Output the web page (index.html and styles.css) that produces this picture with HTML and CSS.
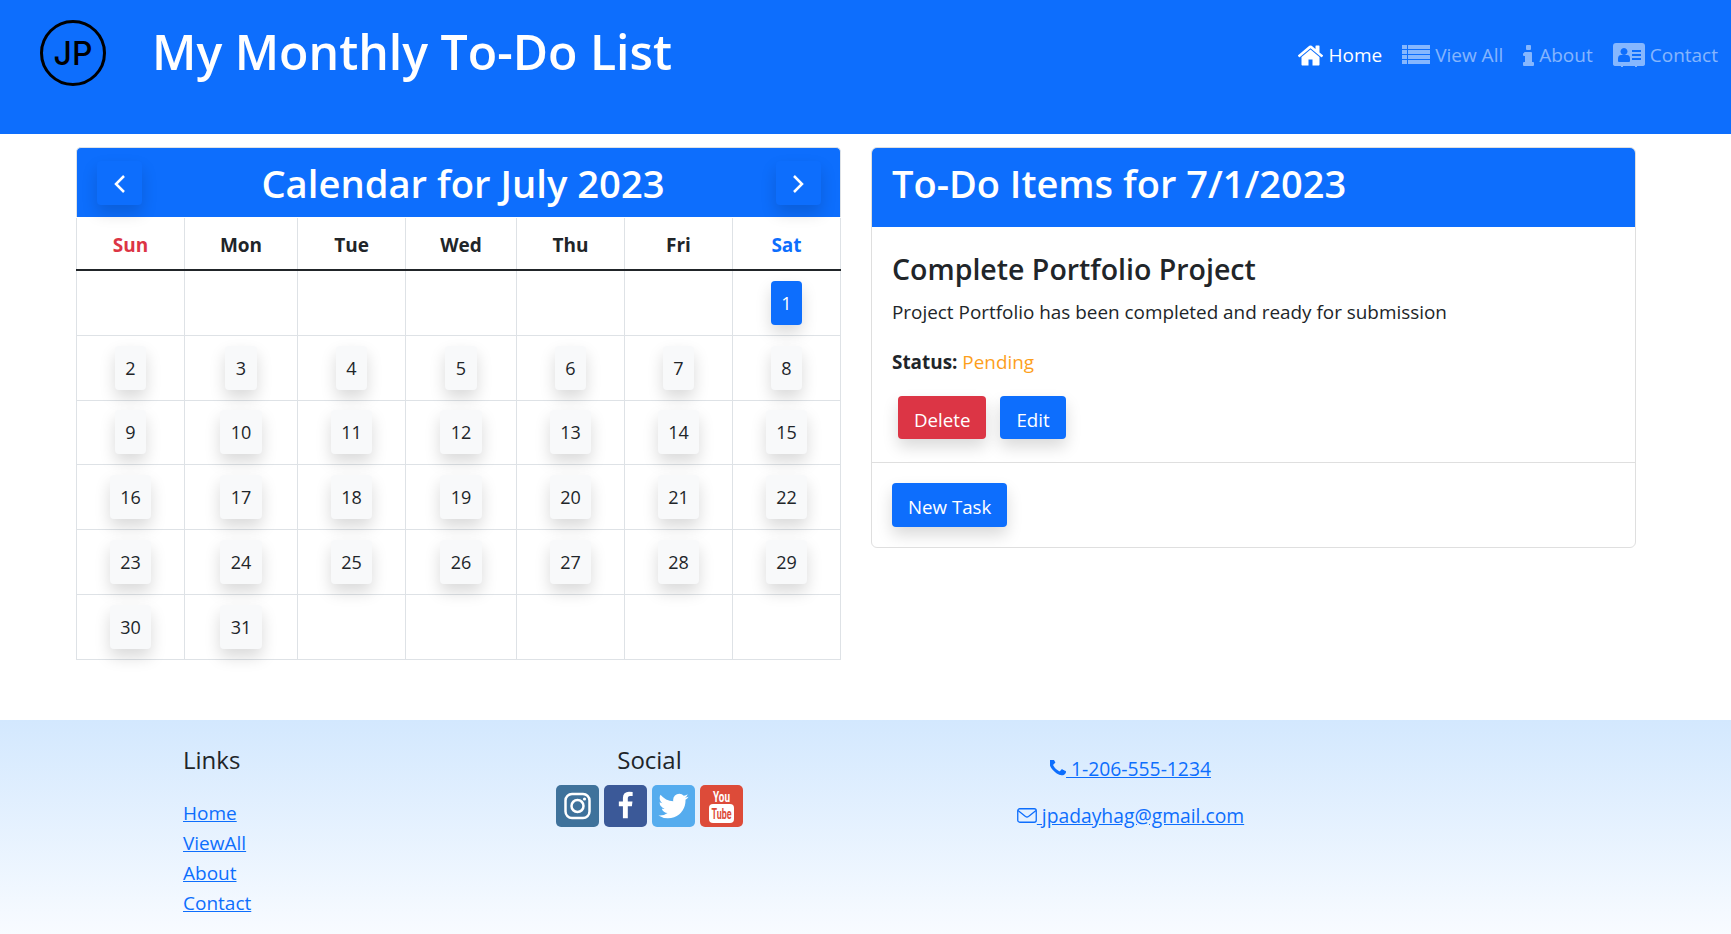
FILE: index.html
```html
<!DOCTYPE html>
<html lang="en">
<head>
  <meta charset="UTF-8">
  <title>My Monthly To-Do List</title>
  <link rel="stylesheet" href="styles.css">
</head>
<body>
  <header class="site-header">
    <div class="brand">
      <svg class="logo" viewBox="0 0 66 66">
        <circle cx="33" cy="33" r="31.500" fill="none" stroke="#000" stroke-width="3"/>
        <text x="33" y="45" text-anchor="middle" font-family="Inter, sans-serif" font-size="32" font-weight="500" fill="#000">JP</text>
      </svg>
      <h1>My Monthly To-Do List</h1>
    </div>
    <nav class="nav">
      <a class="nav-link active" href="#">
        <svg class="nav-icon icon-home" viewBox="96 256 1600 1280"><path fill="currentColor" d="M1472 992v480q0 26-19 45t-45 19h-384v-384h-256v384h-384q-26 0-45-19t-19-45v-480q0-1 .5-3t.5-3l575-474 575 474q1 2 1 6zm223-69l-62 74q-8 9-21 11h-3q-13 0-21-7l-692-577-692 577q-12 8-24 7-13-2-21-11l-62-74q-8-10-7-23.500t11-21.500l719-599q32-26 76-26t76 26l244 204v-195q0-14 9-23t23-9h192q14 0 23 9t9 23v408l219 182q10 8 11 21.500t-7 23.500z"/></svg>
        Home
      </a>
      <a class="nav-link" href="#">
        <svg class="nav-icon icon-list" viewBox="0 0 28 20"><path fill="currentColor" d="M0 0h5v4H0zM6 0h22v4H6zM0 5h5v4H0zM6 5h22v4H6zM0 10h5v4H0zM6 10h22v4H6zM0 15h5v4H0zM6 15h22v4H6z"/></svg>
        View All
      </a>
      <a class="nav-link" href="#">
        <svg class="nav-icon icon-info" viewBox="0 0 11 21"><path fill="currentColor" d="M3 1q0-1 1-1h3q1 0 1 1v3q0 1-1 1H4q-1 0-1-1zM1 8q0-1 1-1h6q1 0 1 1v9h1q1 0 1 1v2q0 1-1 1H1q-1 0-1-1v-2q0-1 1-1h1v-6H1q-1 0-1-1V9q0-1 1-1z"/></svg>
        About
      </a>
      <a class="nav-link" href="#">
        <svg class="nav-icon icon-card" viewBox="0 0 32 24"><path fill="currentColor" fill-rule="evenodd" d="M3 0h26q3 0 3 3v18q0 2-3 2h-5v1h-2v-1H10v1H8v-1H3q-3 0-3-2V3q0-3 3-3zM11 5a3.500 3.500 0 1 0 .01 0zM5 18v-2q0-4 3-4h6q3 0 3 4v2q0 1-1 1H6q-1 0-1-1zM19 7v2h9V7zM19 11v2h9v-2zM19 15v2h9v-2z"/></svg>
        Contact
      </a>
    </nav>
  </header>

  <main class="content">
    <section class="calendar">
      <div class="calendar-header">
        <button class="arrow-btn">
          <svg viewBox="0 0 12 20"><path d="M10 2 2 10l8 8" fill="none" stroke="#fff" stroke-width="2.500"/></svg>
        </button>
        <h2>Calendar for July 2023</h2>
        <button class="arrow-btn">
          <svg viewBox="0 0 12 20"><path d="m2 2 8 8-8 8" fill="none" stroke="#fff" stroke-width="2.500"/></svg>
        </button>
      </div>
      <table class="calendar-table">
        <thead>
          <tr>
            <th class="sun">Sun</th><th>Mon</th><th>Tue</th><th>Wed</th><th>Thu</th><th>Fri</th><th class="sat">Sat</th>
          </tr>
        </thead>
        <tbody>
          <tr>
            <td></td><td></td><td></td><td></td><td></td><td></td>
            <td><button class="day selected">1</button></td>
          </tr>
          <tr>
            <td><button class="day">2</button></td><td><button class="day">3</button></td><td><button class="day">4</button></td><td><button class="day">5</button></td><td><button class="day">6</button></td><td><button class="day">7</button></td><td><button class="day">8</button></td>
          </tr>
          <tr>
            <td><button class="day">9</button></td><td><button class="day">10</button></td><td><button class="day">11</button></td><td><button class="day">12</button></td><td><button class="day">13</button></td><td><button class="day">14</button></td><td><button class="day">15</button></td>
          </tr>
          <tr>
            <td><button class="day">16</button></td><td><button class="day">17</button></td><td><button class="day">18</button></td><td><button class="day">19</button></td><td><button class="day">20</button></td><td><button class="day">21</button></td><td><button class="day">22</button></td>
          </tr>
          <tr>
            <td><button class="day">23</button></td><td><button class="day">24</button></td><td><button class="day">25</button></td><td><button class="day">26</button></td><td><button class="day">27</button></td><td><button class="day">28</button></td><td><button class="day">29</button></td>
          </tr>
          <tr>
            <td><button class="day">30</button></td><td><button class="day">31</button></td><td></td><td></td><td></td><td></td><td></td>
          </tr>
        </tbody>
      </table>
    </section>

    <section class="card">
      <h2 class="card-header">To-Do Items for 7/1/2023</h2>
      <div class="card-body">
        <h3>Complete Portfolio Project</h3>
        <p class="task-text">Project Portfolio has been completed and ready for submission</p>
        <p class="task-status"><b>Status:</b> <span class="pending">Pending</span></p>
        <div class="task-actions">
          <button class="btn btn-danger">Delete</button>
          <button class="btn btn-primary">Edit</button>
        </div>
      </div>
      <div class="card-footer">
        <button class="btn btn-primary btn-new">New Task</button>
      </div>
    </section>
  </main>

  <footer class="site-footer">
    <div class="footer-col">
      <h5>Links</h5>
      <ul class="footer-links">
        <li><a href="#">Home</a></li>
        <li><a href="#">ViewAll</a></li>
        <li><a href="#">About</a></li>
        <li><a href="#">Contact</a></li>
      </ul>
    </div>
    <div class="footer-col center">
      <h5>Social</h5>
      <div class="social">
        <a class="social-icon instagram" href="#">
          <svg viewBox="0 0 43 42"><rect x="9.500" y="9" width="24" height="24" rx="6.500" fill="none" stroke="#fff" stroke-width="2.500"/><circle cx="21.500" cy="21" r="6" fill="none" stroke="#fff" stroke-width="2.500"/><circle cx="28.500" cy="14" r="1.600" fill="#fff"/></svg>
        </a>
        <a class="social-icon facebook" href="#">
          <svg viewBox="-420 -420 2632 2632"><path fill="#fff" d="M1343 12v264h-157q-86 0-116 36t-30 108v189h293l-39 296h-254v759h-306v-759h-255v-296h255v-218q0-186 104-288.500t277-102.500q147 0 228 12z"/></svg>
        </a>
        <a class="social-icon twitter" href="#">
          <svg viewBox="-200 -200 2192 2192"><path fill="#fff" d="M1684 408q-67 98-162 167 1 14 1 42 0 130-38 259.500t-115.500 248.500-184.500 210.500-258 146-323 54.500q-271 0-496-145 35 4 78 4 225 0 401-138-105-2-188-64.500t-114-159.500q33 5 61 5 43 0 85-11-112-23-185.500-111.500t-73.500-205.500v-4q68 38 146 41-66-44-105-115t-39-154q0-88 44-163 121 149 294.500 238.500t371.500 99.500q-8-38-8-74 0-134 94.500-228.500t228.500-94.500q140 0 236 102 109-21 205-78-37 115-142 181 91-10 186-49z"/></svg>
        </a>
        <a class="social-icon youtube" href="#">
          <svg viewBox="0 0 43 42">
            <text x="21.500" y="17" text-anchor="middle" font-family="Liberation Sans Narrow, Roboto, sans-serif" font-size="14" font-weight="700" textLength="17" lengthAdjust="spacingAndGlyphs" fill="#fff">You</text>
            <rect x="9" y="19" width="25" height="19" rx="4" fill="#fff"/>
            <text x="21.500" y="34" text-anchor="middle" font-family="Liberation Sans Narrow, Roboto, sans-serif" font-size="14" font-weight="700" textLength="20" lengthAdjust="spacingAndGlyphs" fill="#dd4b39">Tube</text>
          </svg>
        </a>
      </div>
    </div>
    <div class="footer-col center contact">
      <p><a href="#"><svg class="contact-icon" viewBox="256 256 1344 1344"><path fill="currentColor" d="M1600 1240q0 27-10 70.500t-21 68.500q-21 50-122 106-94 51-186 51-27 0-53-3.500t-57.500-12.500-47-14.500-55.500-20.500-49-18q-98-35-175-83-127-79-264-216t-216-264q-48-77-83-175-3-9-18-49t-20.500-55.500-14.500-47-12.500-57.500-3.500-53q0-92 51-186 56-101 106-122 25-11 68.500-21t70.500-10q14 0 21 3 18 6 53 76 11 19 30 54t35 63.500 31 53.500q3 4 17.500 25t21.500 35.500 7 28.500q0 20-28.500 50t-62 55-62 53-28.500 46q0 9 5 22.500t8.500 20.500 14 24 11.500 19q76 137 174 235t235 174q2 1 19 11.500t24 14 20.500 8.500 22.500 5q18 0 46-28.500t53-62 55-62 50-28.500q14 0 28.500 7t35.500 21.500 25 17.500q25 15 53.500 31t63.500 35 54 30q70 35 76 53 3 7 3 21z"/></svg> 1-206-555-1234</a></p>
      <p><a href="#"><svg class="contact-icon mail" viewBox="0 0 20 15"><rect x=".75" y=".75" width="18.500" height="13.500" rx="2" fill="none" stroke="currentColor" stroke-width="1.300"/><path d="m1 2.500 7.500 6q1.500 1 3 0l7.500-6" fill="none" stroke="currentColor" stroke-width="1.300"/></svg> jpadayhag@gmail.com</a></p>
    </div>
  </footer>
</body>
</html>
```

FILE: styles.css
```css
* {
  box-sizing: border-box;
}
body {
  margin: 0;
  font-family: "Open Sans", "Noto Sans", sans-serif;
  font-size: 18.900px;
  line-height: 1.5;
  color: #212529;
  background: #fff;
}
h1, h2, h3, h5, p, ul {
  margin: 0;
}
button {
  font-family: inherit;
  font-size: inherit;
  border: 0;
  cursor: pointer;
}

/* header */
.site-header {
  height: 134px;
  background: #0d6efd;
  color: #fff;
  display: flex;
  justify-content: space-between;
  align-items: flex-start;
  padding: 20px 5px 0 40px;
}
.brand {
  display: flex;
  align-items: center;
  gap: 46px;
}
.logo {
  width: 66px;
  height: 66px;
}
.site-header h1 {
  font-size: 48.200px;
  font-weight: 600;
  line-height: 62px;
  margin-bottom: 4px;
}
.nav {
  display: flex;
  gap: 4px;
  padding-top: 23px;
}
.nav-link {
  display: flex;
  align-items: center;
  gap: 5px;
  padding: 0 8px;
  height: 24px;
  text-decoration: none;
  font-size: 19px;
  color: rgba(255,255,255,.5);
  white-space: nowrap;
}
.nav-link.active {
  color: #fff;
}
.nav-icon {
  flex: none;
}
.icon-home {
  width: 25px;
  height: 21px;
}
.icon-list {
  width: 28px;
  height: 20px;
}
.icon-info {
  width: 11px;
  height: 21px;
}
.icon-card {
  width: 32px;
  height: 24px;
}

/* main area */
.content {
  display: grid;
  grid-template-columns: 765px 765px;
  gap: 30px;
  padding: 13px 95px 0 76px;
  align-items: start;
}
.calendar-header {
  height: 70px;
  background: #0d6efd;
  border: 1px solid #dee2e6;
  border-bottom: 0;
  border-radius: 5px 5px 0 0;
  color: #fff;
  display: flex;
  align-items: center;
  justify-content: space-between;
  padding: 0 19px 0 20px;
}
.calendar-header h2 {
  margin-left: 8px;
  font-size: 38.200px;
  font-weight: 600;
  line-height: 44px;
}
.arrow-btn {
  width: 45px;
  height: 44px;
  padding: 2px 0 0;
  background: #0d6efd;
  border-radius: 4px;
  box-shadow: 0 8px 16px rgba(0,0,0,.15);
  display: flex;
  align-items: center;
  justify-content: center;
}
.arrow-btn svg {
  width: 12px;
  height: 20px;
}
.calendar-table {
  width: 765px;
  table-layout: fixed;
  border-collapse: collapse;
  margin-top: 1px;
}
.calendar-table th {
  height: 52px;
  padding-top: 4px;
  font-size: 19px;
  font-weight: 700;
  text-align: center;
  border: 1px solid #dee2e6;
  border-top: 0;
  border-bottom: 2px solid #212529;
}
.calendar-table th:nth-child(1) { width: 108px; }
.calendar-table th:nth-child(2) { width: 113px; }
.calendar-table th:nth-child(3) { width: 108px; }
.calendar-table th:nth-child(4) { width: 111px; }
.calendar-table th:nth-child(5) { width: 108px; }
.calendar-table th:nth-child(6) { width: 108px; }
.calendar-table .sun {
  color: #dc3545;
}
.calendar-table .sat {
  color: #0d6efd;
}
.calendar-table td {
  height: 65px;
  padding: 0;
  text-align: center;
  vertical-align: middle;
  border: 1px solid #dee2e6;
}
.calendar-table tbody tr:nth-child(3) td {
  height: 64px;
}
.day {
  height: 44px;
  padding: 0 10.500px;
  font-size: 18px;
  background: #f8f9fa;
  color: #212529;
  border-radius: 4px;
  box-shadow: 0 8px 16px rgba(0,0,0,.15);
  vertical-align: middle;
}
.day.selected {
  background: #0d6efd;
  color: #fff;
}

/* task card */
.card {
  border: 1px solid #dfdfdf;
  border-radius: 6px;
  overflow: hidden;
}
.card-header {
  height: 80px;
  margin: -1px -1px 0;
  padding: 0 21px;
  background: #0d6efd;
  color: #fff;
  font-size: 38px;
  font-weight: 600;
  line-height: 72px;
}
.card-body {
  padding: 22px 20px 23px;
  border-bottom: 1px solid #dfdfdf;
}
.card-body h3 {
  font-size: 28.500px;
  font-weight: 600;
  line-height: 40px;
}
.task-text {
  margin-top: 9px;
  line-height: 28px;
}
.task-status {
  margin-top: 22px;
  line-height: 28px;
}
.pending {
  color: #fd9f1c;
}
.task-actions {
  display: flex;
  gap: 14px;
  margin: 20px 0 0 6px;
}
.btn {
  height: 43px;
  padding: 3px 16px 0;
  font-size: 18.700px;
  color: #fff;
  border-radius: 4px;
  box-shadow: 0 8px 16px rgba(0,0,0,.15);
}
.btn-new {
  height: 44px;
}
.btn-danger {
  background: #dc3545;
}
.btn-primary {
  background: #0d6efd;
}
.card-footer {
  padding: 20px;
}

/* footer */
.site-footer {
  margin-top: 60px;
  height: 214px;
  display: grid;
  grid-template-columns: 226px 481px 481px;
  padding: 25px 0 0 183px;
  background: linear-gradient(#d3e8fe, #f8fbff);
}
.footer-col h5 {
  font-size: 24px;
  font-weight: 500;
  line-height: 30px;
}
.footer-col.center {
  text-align: center;
}
.footer-col a {
  color: #0d6efd;
}
.footer-links {
  list-style: none;
  padding: 0;
  margin-top: 23px;
  font-size: 19px;
}
.footer-links li {
  line-height: 30px;
}
.social {
  display: flex;
  justify-content: center;
  gap: 5px;
  margin-top: 10px;
}
.social-icon {
  width: 43px;
  height: 42px;
  border-radius: 5px;
  display: block;
}
.social-icon svg {
  width: 43px;
  height: 42px;
  display: block;
}
.instagram { background: #3f729b; }
.facebook { background: #3b5998; }
.twitter { background: #55acee; }
.youtube { background: #dd4b39; }
.contact {
  font-size: 19.300px;
  padding-top: 10px;
}
.contact p {
  margin-bottom: 19px;
  line-height: 28px;
}
.contact-icon {
  width: 16px;
  height: 16px;
}
.contact-icon.mail {
  width: 20px;
  height: 15px;
}
```
